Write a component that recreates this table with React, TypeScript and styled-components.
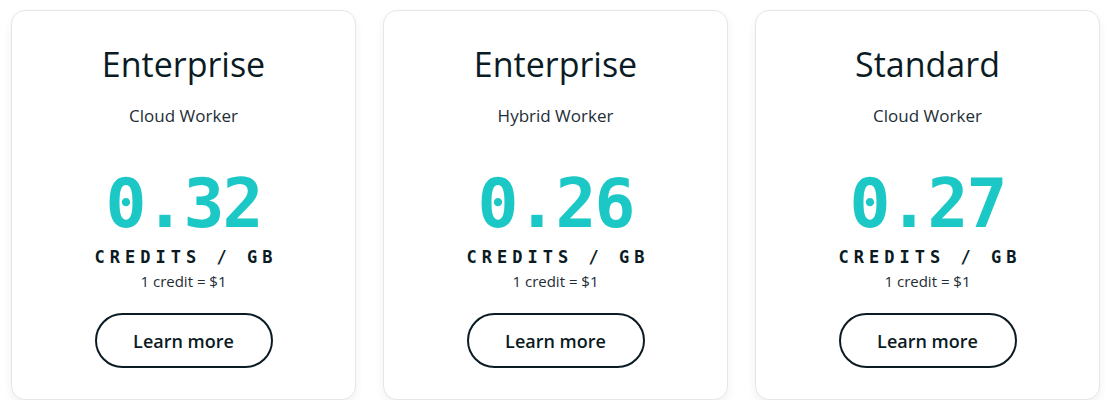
import React from "react";
import styled, { createGlobalStyle } from "styled-components";

const Global = createGlobalStyle`
  html, body { margin: 0; padding: 0; background: #ffffff; }
  body { font-family: "Open Sans", "Noto Sans", sans-serif; color: #0b1b24; }
`;

const Row = styled.div`
  display: grid;
  grid-template-columns: repeat(3, 345px);
  column-gap: 27px;
  padding: 10px 0 0 11px;
`;

const Card = styled.div`
  height: 390px;
  box-sizing: border-box;
  border: 1px solid #e6e6e6;
  border-radius: 14px;
  background: #fff;
  box-shadow: 0 4px 10px rgba(0, 0, 0, 0.06);
  display: flex;
  flex-direction: column;
  align-items: center;
  padding-top: 30px;
`;

const Title = styled.h2`
  margin: 0;
  font-weight: 400;
  font-size: 34px;
  line-height: 46px;
  color: #0b1b24;
`;

const Sub = styled.div`
  margin-top: 17px;
  font-size: 17px;
  line-height: 24px;
  color: #1e2d36;
`;

const Price = styled.div`
  margin-top: 38px;
  font-family: "DejaVu Sans Mono", monospace;
  font-weight: 700;
  font-size: 68px;
  line-height: 76px;
  color: #1cc8c6;
  letter-spacing: -2px;
`;

const Unit = styled.div`
  margin-top: 5px;
  font-family: "DejaVu Sans Mono", monospace;
  font-weight: 700;
  font-size: 17px;
  line-height: 20px;
  letter-spacing: 5px;
  margin-right: -5px;
  color: #0b1b24;
`;

const Note = styled.div`
  margin-top: 4px;
  font-size: 15px;
  line-height: 20px;
  color: #1e2d36;
`;

const Button = styled.button`
  margin-top: 22px;
  width: 178px;
  height: 55px;
  box-sizing: border-box;
  border: 2px solid #0b1b24;
  border-radius: 28px;
  background: #fff;
  font-family: "Open Sans", sans-serif;
  font-weight: 600;
  font-size: 18px;
  color: #0b1b24;
  cursor: pointer;
`;

const plans = [
  { title: "Enterprise", sub: "Cloud Worker", price: "0.32" },
  { title: "Enterprise", sub: "Hybrid Worker", price: "0.26" },
  { title: "Standard", sub: "Cloud Worker", price: "0.27" },
];

export default function App() {
  return (
    <>
      <Global />
      <Row>
        {plans.map((p, i) => (
          <Card key={i}>
            <Title>{p.title}</Title>
            <Sub>{p.sub}</Sub>
            <Price>{p.price}</Price>
            <Unit>CREDITS / GB</Unit>
            <Note>1 credit = $1</Note>
            <Button>Learn more</Button>
          </Card>
        ))}
      </Row>
    </>
  );
}
